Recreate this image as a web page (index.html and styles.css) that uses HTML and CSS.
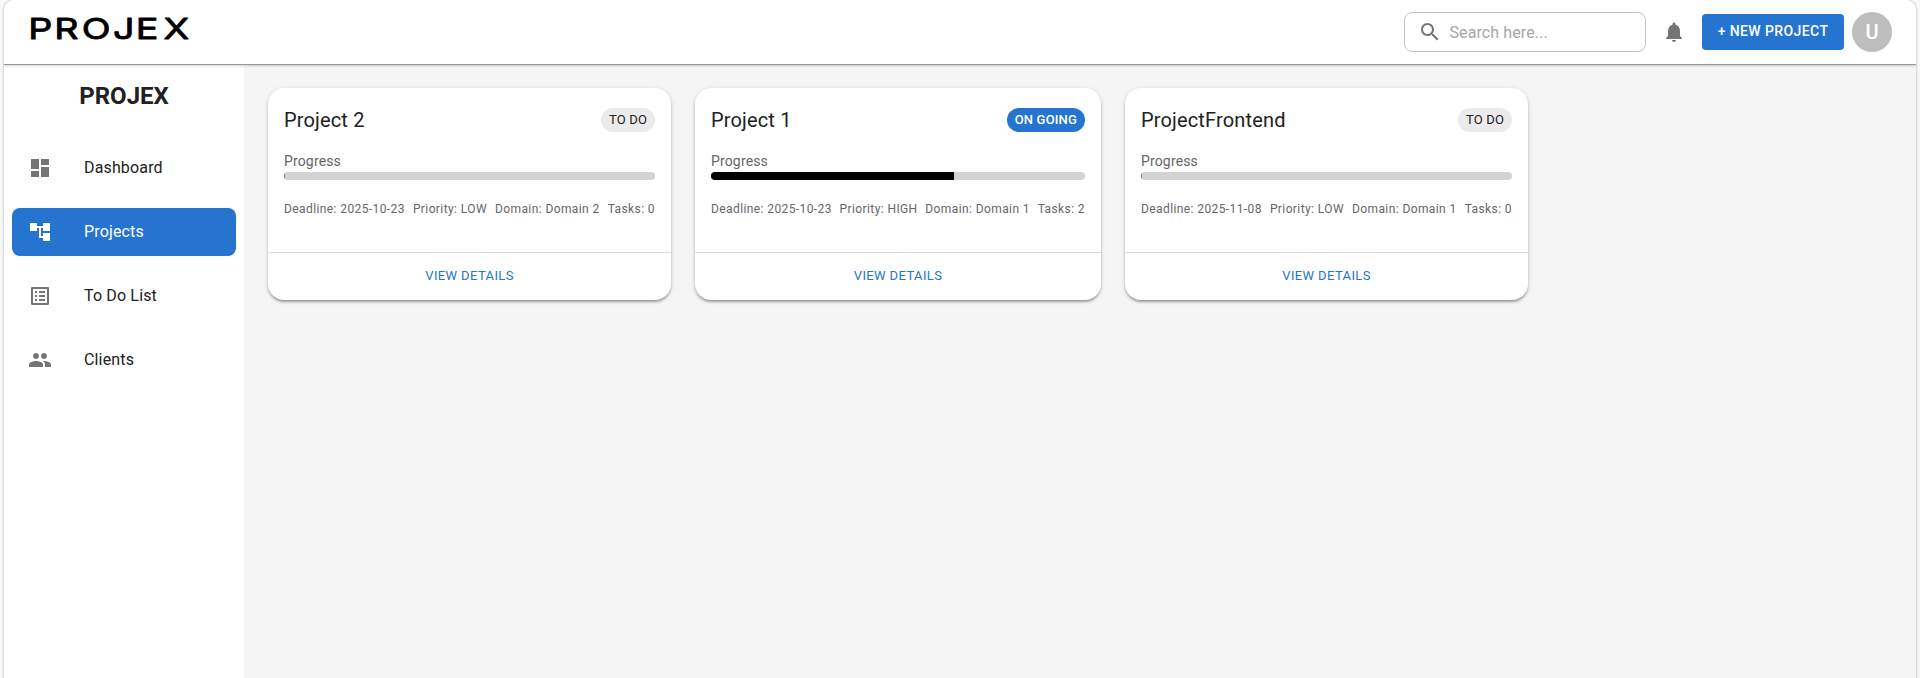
FILE: index.html
```html
<!DOCTYPE html>
<html lang="en">
<head>
<meta charset="utf-8">
<title>Projex</title>
<link rel="stylesheet" href="styles.css">
</head>
<body>
<div class="shell">
  <header class="topbar">
    <svg class="logo" width="180" height="44" role="img" aria-label="PROJEX"><text class="logo-text" transform="scale(1.3 1)" x="3.2 23.2 44.4 68.5 86 107.3" y="30.5">PROJEX</text></svg>
    <div class="actions">
      <div class="search">
        <svg class="icon" viewBox="0 0 24 24"><path d="M15.5 14h-.79l-.28-.27C15.41 12.59 16 11.11 16 9.5 16 5.91 13.09 3 9.5 3S3 5.91 3 9.5 5.91 16 9.5 16c1.61 0 3.09-.59 4.23-1.57l.27.28v.79l5 4.99L20.49 19zm-6 0C7.01 14 5 11.99 5 9.5S7.01 5 9.5 5 14 7.01 14 9.5 11.99 14 9.5 14"/></svg>
        <span class="placeholder">Search here...</span>
      </div>
      <div class="bell"><svg class="icon" viewBox="0 0 24 24"><path d="M12 22c1.1 0 2-.9 2-2h-4c0 1.1.89 2 2 2m6-6v-5c0-3.07-1.64-5.64-4.5-6.32V4c0-.83-.67-1.5-1.5-1.5s-1.5.67-1.5 1.5v.68C7.63 5.36 6 7.92 6 11v5l-2 2v1h16v-1z"/></svg></div>
      <button class="new-project">+ NEW PROJECT</button>
      <div class="avatar">U</div>
    </div>
  </header>
  <div class="body">
    <nav class="sidebar">
      <h1 class="brand">PROJEX</h1>
      <a class="nav-item"><svg class="icon" viewBox="0 0 24 24"><path d="M3 13h8V3H3zm0 8h8v-6H3zm10 0h8V11h-8zm0-18v6h8V3z"/></svg><span class="nav-text">Dashboard</span></a>
      <a class="nav-item active"><svg class="icon" viewBox="0 0 24 24"><path d="M22 11V3h-7v3H9V3H2v8h7V8h2v10h4v3h7v-8h-7v3h-2V8h2v3z"/></svg><span class="nav-text">Projects</span></a>
      <a class="nav-item"><svg class="icon" viewBox="0 0 24 24"><path d="M19 5v14H5V5zm1.1-2H3.9c-.5 0-.9.4-.9.9v16.2c0 .4.4.9.9.9h16.2c.4 0 .9-.5.9-.9V3.9c0-.5-.5-.9-.9-.9M11 7h6v2h-6zm0 4h6v2h-6zm0 4h6v2h-6zM7 7h2v2H7zm0 4h2v2H7zm0 4h2v2H7z"/></svg><span class="nav-text">To Do List</span></a>
      <a class="nav-item"><svg class="icon" viewBox="0 0 24 24"><path d="M16 11c1.66 0 2.99-1.34 2.99-3S17.66 5 16 5s-3 1.34-3 3 1.34 3 3 3m-8 0c1.66 0 2.99-1.34 2.99-3S9.66 5 8 5 5 6.34 5 8s1.34 3 3 3m0 2c-2.33 0-7 1.17-7 3.5V19h14v-2.5c0-2.33-4.67-3.5-7-3.5m8 0c-.29 0-.62.02-.97.05 1.16.84 1.97 1.97 1.97 3.45V19h6v-2.5c0-2.33-4.67-3.5-7-3.5"/></svg><span class="nav-text">Clients</span></a>
    </nav>
    <main class="content">
      <article class="card">
        <div class="card-main">
          <div class="card-head"><h2 class="title">Project 2</h2><span class="chip">TO DO</span></div>
          <div class="label">Progress</div>
          <div class="track"><div class="fill empty"></div></div>
          <div class="meta"><span>Deadline: 2025-10-23</span><span>Priority: LOW</span><span>Domain: Domain 2</span><span>Tasks: 0</span></div>
        </div>
        <div class="card-foot">VIEW DETAILS</div>
      </article>
      <article class="card">
        <div class="card-main">
          <div class="card-head"><h2 class="title">Project 1</h2><span class="chip ongoing">ON GOING</span></div>
          <div class="label">Progress</div>
          <div class="track"><div class="fill" style="width:65%"></div></div>
          <div class="meta"><span>Deadline: 2025-10-23</span><span>Priority: HIGH</span><span>Domain: Domain 1</span><span>Tasks: 2</span></div>
        </div>
        <div class="card-foot">VIEW DETAILS</div>
      </article>
      <article class="card">
        <div class="card-main">
          <div class="card-head"><h2 class="title">ProjectFrontend</h2><span class="chip">TO DO</span></div>
          <div class="label">Progress</div>
          <div class="track"><div class="fill empty"></div></div>
          <div class="meta"><span>Deadline: 2025-11-08</span><span>Priority: LOW</span><span>Domain: Domain 1</span><span>Tasks: 0</span></div>
        </div>
        <div class="card-foot">VIEW DETAILS</div>
      </article>
    </main>
  </div>
</div>
</body>
</html>
```
FILE: styles.css
```css
* { box-sizing: border-box; }
body {
  margin: 0;
  height: 678px;
  overflow: hidden;
  padding: 0 4px;
  background: #f8f8f8;
  color: #212121;
  font-family: Roboto, sans-serif;
}
.shell {
  height: 700px;
  display: flex;
  flex-direction: column;
  background: #f5f5f5;
  border-radius: 10px;
  box-shadow: 0 0 3px rgba(0, 0, 0, .3);
  overflow: hidden;
}
.topbar {
  flex: none;
  height: 65px;
  display: flex;
  justify-content: space-between;
  background: #fff;
  border-bottom: 1px solid #999;
  box-shadow: 0 1px 2px rgba(0, 0, 0, .18);
  z-index: 1;
}
.logo { margin: 9px 0 0 20px; }
.logo-text {
  font: 400 29px Inter, sans-serif;
  fill: #000;
  stroke: #000;
  stroke-width: .8px;
  stroke-linejoin: round;
}
.icon { flex: none; display: block; width: 24px; height: 24px; fill: #757575; }
.actions { display: flex; align-items: center; padding-right: 24px; }
.search {
  width: 242px;
  height: 40px;
  display: flex;
  align-items: center;
  gap: 8px;
  padding-left: 13px;
  border: 1px solid #c4c4c4;
  border-radius: 8px;
}
.placeholder { font-size: 16px; letter-spacing: .1px; color: #a6a6a6; margin-left: -.5px; }
.bell { padding: 8px; margin: 0 8px; }
.new-project {
  width: 142px;
  height: 36px;
  padding: 0 0 2px;
  border: 0;
  border-radius: 4px;
  background: #2574d0;
  color: #fff;
  font: 500 14px/24px Roboto, sans-serif;
  letter-spacing: .4px;
}
.avatar {
  width: 40px;
  height: 40px;
  margin-left: 8px;
  border-radius: 50%;
  background: #bdbdbd;
  color: #fff;
  font-size: 20px;
  font-weight: 500;
  line-height: 40px;
  text-align: center;
}
.body { flex: 1; display: flex; }
.sidebar { width: 240px; padding: 0 8px; background: #fff; }
.brand {
  margin: 15px 0 32px;
  font-size: 24px;
  line-height: 32px;
  font-weight: 700;
  text-align: center;
}
.nav-item {
  display: flex;
  align-items: center;
  gap: 32px;
  height: 48px;
  margin-bottom: 16px;
  padding-left: 16px;
  border-radius: 8px;
  font-size: 16px;
  letter-spacing: .15px;
}
.nav-text { padding-bottom: 2px; }
.active { background: #2574d0; color: #fff; }
.active .icon { fill: #fff; }
.content {
  display: grid;
  grid-template-columns: 403px 406px 403px;
  gap: 24px;
  align-items: start;
  padding: 23px 24px;
}
.card {
  height: 212px;
  display: flex;
  flex-direction: column;
  border-radius: 16px;
  background: #fff;
  box-shadow: 0 3px 3px -2px rgba(0, 0, 0, .3), 0 2px 3px rgba(0, 0, 0, .16), 0 1px 5px rgba(0, 0, 0, .12);
}
.card-main { height: 165px; padding: 16px; border-bottom: 1px solid #ddd; }
.card-head { display: flex; align-items: center; justify-content: space-between; height: 32px; }
.title { margin: 0; font-size: 20px; font-weight: 400; letter-spacing: .15px; }
.chip {
  height: 24px;
  padding: 0 8px;
  border-radius: 12px;
  background: #ebebeb;
  font-size: 13px;
  line-height: 24px;
  letter-spacing: .16px;
}
.ongoing { background: #2574d0; color: #fff; font-weight: 500; }
.label { margin-top: 15px; padding-bottom: 1px; font-size: 14px; line-height: 20px; letter-spacing: .15px; color: #666; }
.track { height: 8px; border-radius: 4px; background: #d3d3d3; overflow: hidden; }
.fill { height: 8px; background: #000; }
.empty { width: 1px; background: #777; }
.meta {
  display: flex;
  justify-content: space-between;
  margin-top: 19px;
  font-size: 12px;
  line-height: 20px;
  letter-spacing: .4px;
  color: #666;
  white-space: nowrap;
}
.card-foot {
  flex: 1;
  color: #2574d0;
  font-size: 13px;
  font-weight: 400;
  line-height: 46px;
  letter-spacing: .38px;
  text-align: center;
}
```
